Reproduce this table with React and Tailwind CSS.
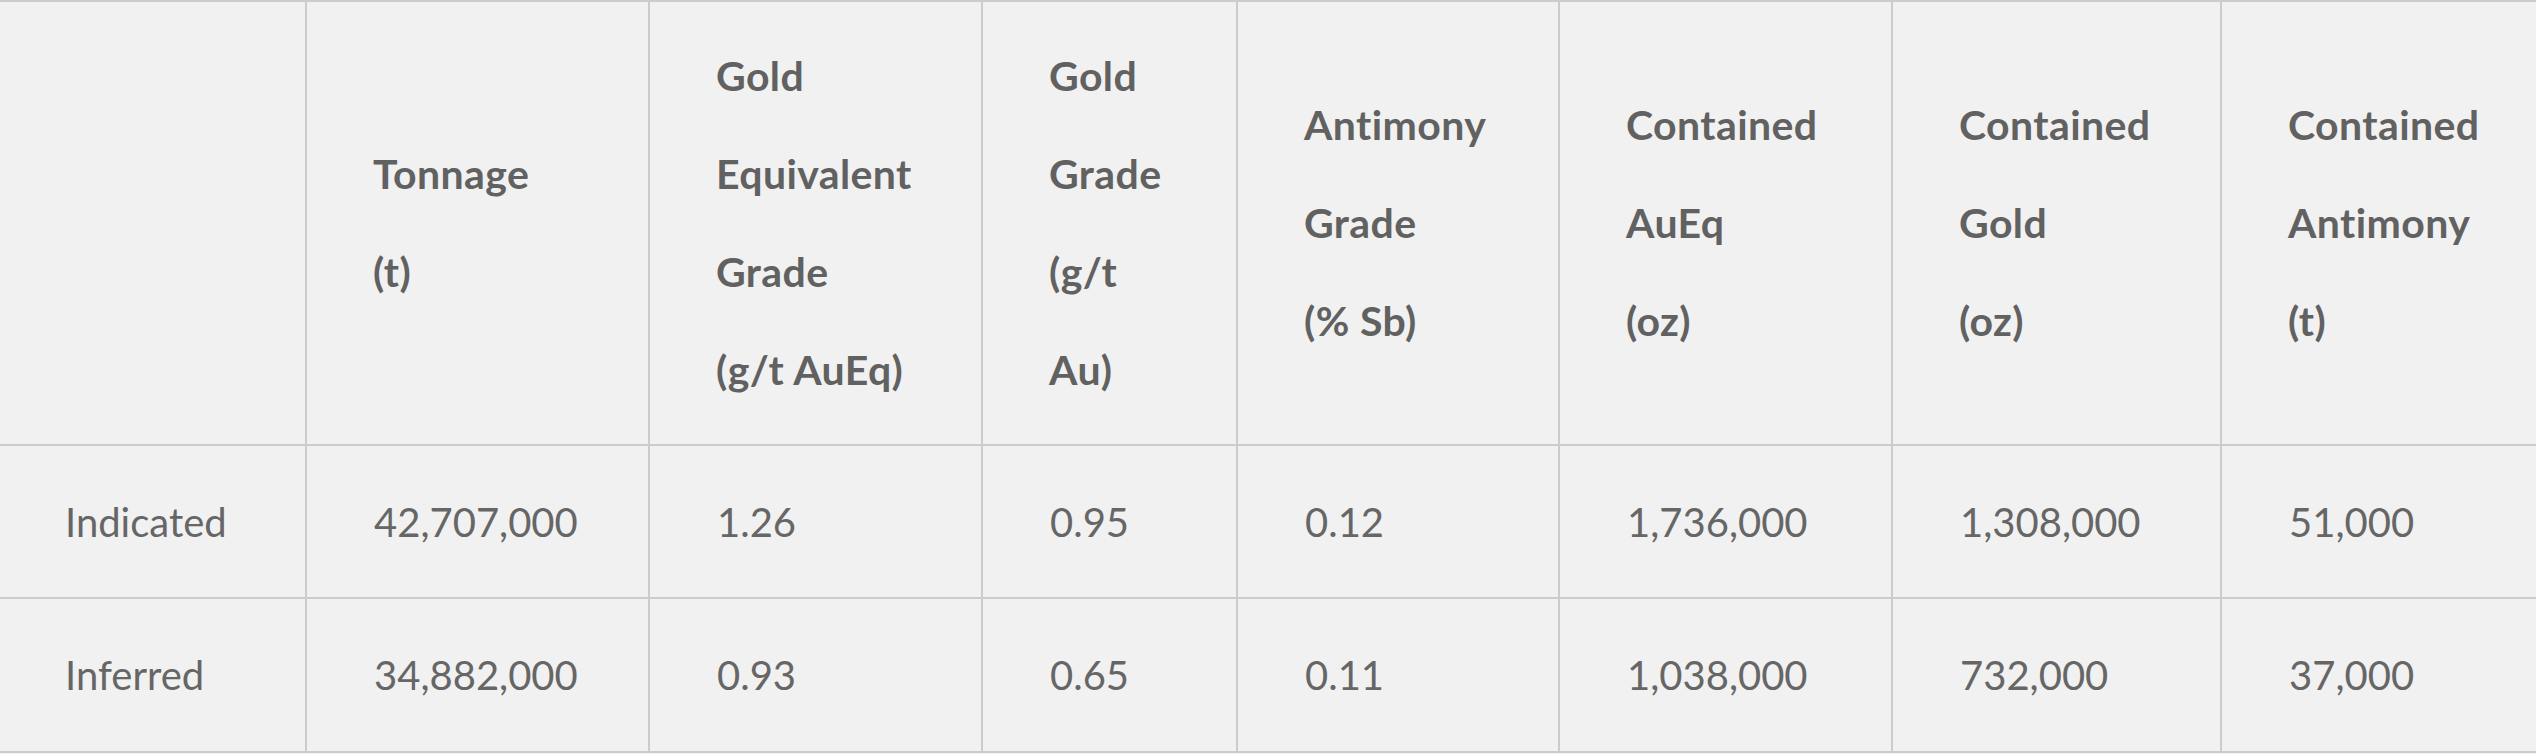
import React from "react";

const cols = "grid grid-cols-[305px_343px_333px_255px_322px_333px_329px_316px]";

const headers = [
  [],
  ["Tonnage", "(t)"],
  ["Gold", "Equivalent", "Grade", "(g/t AuEq)"],
  ["Gold", "Grade", "(g/t", "Au)"],
  ["Antimony", "Grade", "(% Sb)"],
  ["Contained", "AuEq", "(oz)"],
  ["Contained", "Gold", "(oz)"],
  ["Contained", "Antimony", "(t)"],
];

const rows = [
  ["Indicated", "42,707,000", "1.26", "0.95", "0.12", "1,736,000", "1,308,000", "51,000"],
  ["Inferred", "34,882,000", "0.93", "0.65", "0.11", "1,038,000", "732,000", "37,000"],
];

export default function App() {
  return (
    <div className="w-[2536px] h-[754px] bg-[#f1f1f1] font-['Lato','Liberation_Sans',sans-serif] text-[#666666]">
      <div className="border-t-2 border-b-2 border-[#cccccc]">
        <div className={`${cols} h-[444px] border-b-2 border-[#cccccc]`}>
          {headers.map((lines, i) => (
            <div
              key={i}
              className={`flex flex-col justify-center ${i === 0 ? "pl-[65px]" : "pl-[66px] border-l-2 border-[#cccccc]"}`}
            >
              {lines.map((l, j) => (
                <div key={j} className="text-[41px] leading-[98px] font-bold tracking-[0.4px] text-[#616161] whitespace-nowrap">
                  {l}
                </div>
              ))}
            </div>
          ))}
        </div>
        {rows.map((r, ri) => (
          <div
            key={ri}
            className={`${cols} ${ri === 0 ? "h-[153px] border-b-2 border-[#cccccc]" : "h-[152px]"}`}
          >
            {r.map((c, i) => (
              <div
                key={i}
                className={`flex items-center text-[40px] whitespace-nowrap ${i === 0 ? "pl-[65px]" : "pl-[67px] border-l-2 border-[#cccccc]"}`}
              >
                {c}
              </div>
            ))}
          </div>
        ))}
      </div>
    </div>
  );
}
